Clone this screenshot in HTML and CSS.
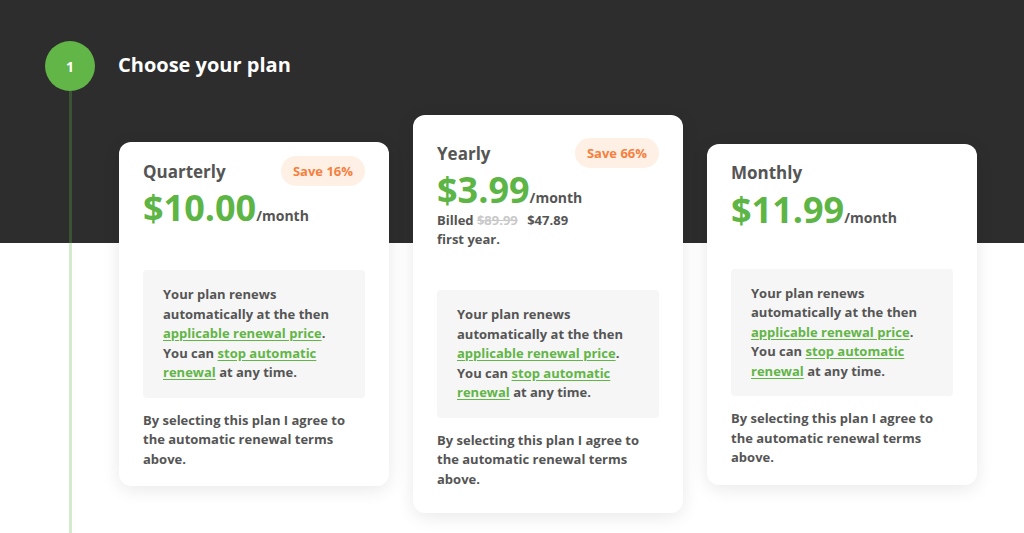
FILE: index.html
```html
<!DOCTYPE html>
<html lang="en">
<head>
<meta charset="utf-8">
<title>Choose your plan</title>
<link rel="stylesheet" href="styles.css">
</head>
<body>
<div class="page">
  <div class="rail">
    <div class="step">1</div>
    <div class="step-line"></div>
  </div>
  <div class="main">
    <h1 class="title">Choose your plan</h1>
    <div class="plans">
      <div class="card">
        <div class="head">
          <span class="name">Quarterly</span>
          <span class="badge">Save 16%</span>
        </div>
        <div class="price"><span class="amount">$10.00</span><span class="per">/month</span></div>
        <div class="note">
          Your plan renews automatically at the then <a href="#">applicable renewal price</a>. You can <a href="#">stop automatic renewal</a> at any time.
        </div>
        <p class="terms">By selecting this plan I agree to the automatic renewal terms above.</p>
      </div>
      <div class="card featured">
        <div class="head">
          <span class="name">Yearly</span>
          <span class="badge">Save 66%</span>
        </div>
        <div class="price"><span class="amount">$3.99</span><span class="per">/month</span></div>
        <div class="billed">Billed <s class="old">$89.99</s> <span class="new">$47.89</span><br>first year.</div>
        <div class="note">
          Your plan renews automatically at the then <a href="#">applicable renewal price</a>. You can <a href="#">stop automatic renewal</a> at any time.
        </div>
        <p class="terms">By selecting this plan I agree to the automatic renewal terms above.</p>
      </div>
      <div class="card compact">
        <div class="head">
          <span class="name">Monthly</span>
        </div>
        <div class="price"><span class="amount">$11.99</span><span class="per">/month</span></div>
        <div class="note">
          Your plan renews automatically at the then <a href="#">applicable renewal price</a>. You can <a href="#">stop automatic renewal</a> at any time.
        </div>
        <p class="terms">By selecting this plan I agree to the automatic renewal terms above.</p>
      </div>
    </div>
  </div>
</div>
</body>
</html>
```

FILE: styles.css
```css
html, body {
  margin: 0;
  padding: 0;
}

body {
  font-family: "Open Sans", "Liberation Sans", sans-serif;
  color: #555555;
  background: #ffffff;
  overflow: hidden;
}

.page {
  display: flex;
  min-height: 100vh;
  box-sizing: border-box;
  padding: 41px 0 0 45px;
  background: linear-gradient(to bottom, #2d2d2d 0, #2d2d2d 243px, #ffffff 243px);
}

.rail {
  width: 50px;
  display: flex;
  flex-direction: column;
  align-items: center;
  flex-shrink: 0;
}

.step {
  width: 50px;
  height: 50px;
  border-radius: 50%;
  background: #62b547;
  color: #ffffff;
  font-size: 14px;
  font-weight: 700;
  display: flex;
  align-items: center;
  justify-content: center;
}

.step-line {
  flex: 1;
  width: 3px;
  background: rgba(98, 181, 71, 0.28);
}

.main {
  margin-left: 23px;
}

.title {
  margin: -2px 0 0;
  height: 50px;
  display: flex;
  align-items: center;
  color: #ffffff;
  font-size: 20px;
  font-weight: 700;
}

.plans {
  display: flex;
  align-items: center;
  gap: 24px;
  margin-top: 26px;
  margin-left: 1px;
}

.card {
  width: 270px;
  box-sizing: border-box;
  background: #ffffff;
  border-radius: 12px;
  padding: 14px 24px 17px;
  box-shadow: 0 4px 18px rgba(0, 0, 0, 0.09);
}

.card.featured {
  padding: 23px 24px 24px;
}

.head {
  height: 30px;
  display: flex;
  align-items: center;
  justify-content: space-between;
}

.name {
  font-size: 17px;
  font-weight: 700;
  color: #555555;
}

.badge {
  height: 30px;
  line-height: 30px;
  padding: 0 12px;
  border-radius: 15px;
  background: #fff0e6;
  color: #f5803e;
  font-size: 13px;
  font-weight: 700;
}

.price {
  height: 43px;
  font-size: 36px;
  line-height: 43px;
  white-space: nowrap;
}

.amount {
  font-size: 36px;
  font-weight: 700;
  line-height: 1;
  color: #5cb545;
}

.per {
  font-size: 14px;
  font-weight: 700;
  line-height: 1;
  color: #555555;
}

.billed {
  font-size: 13px;
  font-weight: 700;
  line-height: 19px;
  color: #555555;
}

.billed .old {
  color: #c9c9c9;
  margin-right: 6px;
}

.note {
  margin-top: 41px;
  background: #f6f6f6;
  border-radius: 4px;
  padding: 15px 20px;
  font-size: 13px;
  font-weight: 700;
  line-height: 19.5px;
  color: #555555;
}

.compact .note {
  margin-top: 38px;
}

.note a {
  color: #62b547;
  text-decoration: underline;
  text-underline-offset: 2px;
}

.terms {
  margin: 13px 0 0;
  font-size: 13px;
  font-weight: 700;
  line-height: 19.5px;
  color: #555555;
}
```
